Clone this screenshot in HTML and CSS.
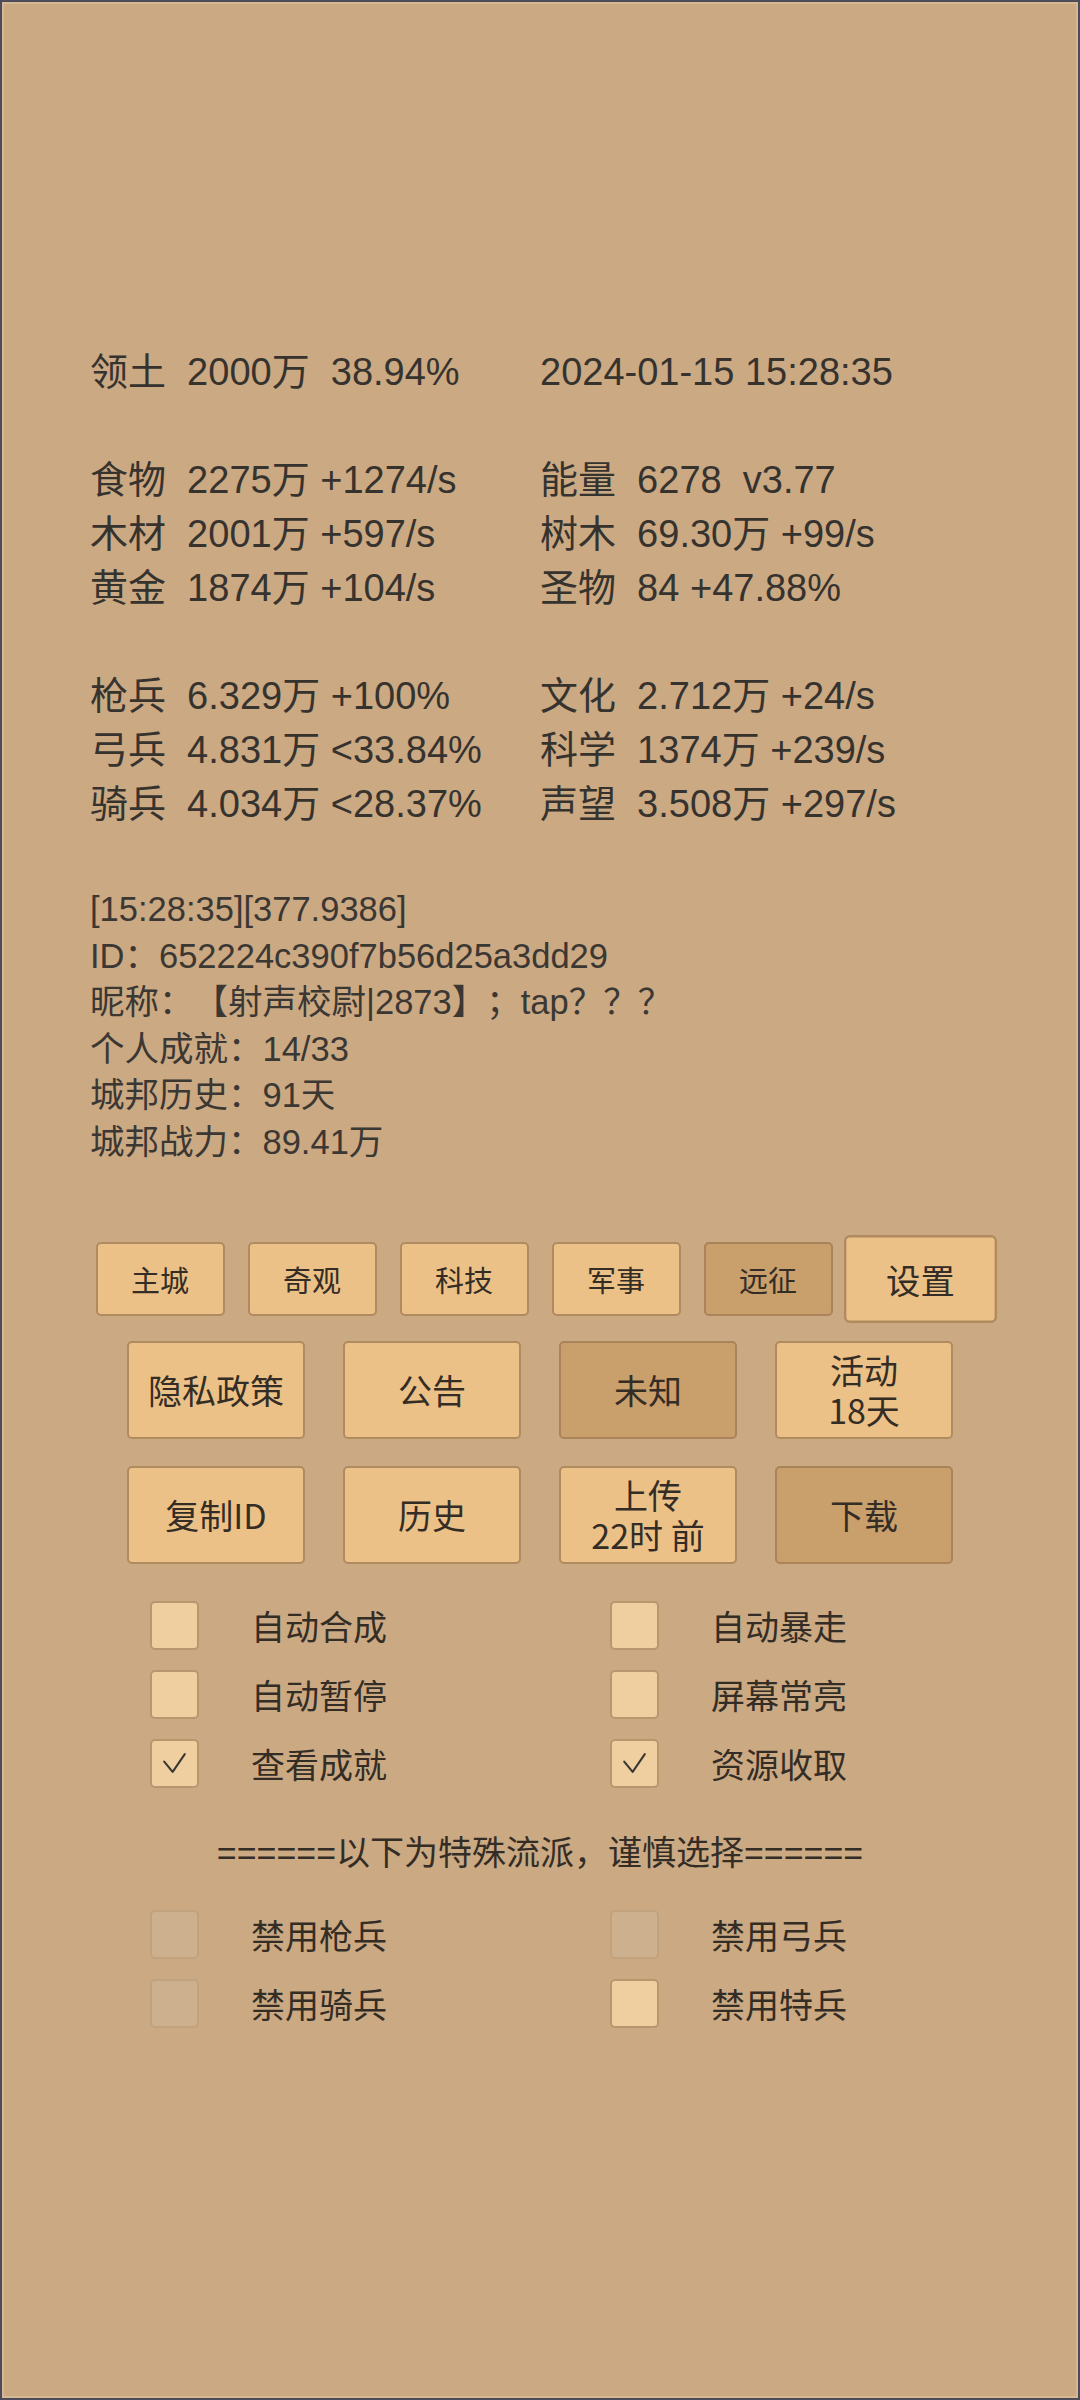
FILE: index.html
```html
<!DOCTYPE html>
<html lang="zh-CN">
<head>
<meta charset="utf-8">
<title>城邦</title>
<link rel="stylesheet" href="styles.css">
</head>
<body>
<div class="screen">
  <section class="stats">
    <div class="cell">领土  2000万  38.94%</div><div class="cell">2024-01-15 15:28:35</div>
    <div class="blank"></div>
    <div class="cell">食物  2275万 +1274/s</div><div class="cell">能量  6278  v3.77</div>
    <div class="cell">木材  2001万 +597/s</div><div class="cell">树木  69.30万 +99/s</div>
    <div class="cell">黄金  1874万 +104/s</div><div class="cell">圣物  84 +47.88%</div>
    <div class="blank"></div>
    <div class="cell">枪兵  6.329万 +100%</div><div class="cell">文化  2.712万 +24/s</div>
    <div class="cell">弓兵  4.831万 &lt;33.84%</div><div class="cell">科学  1374万 +239/s</div>
    <div class="cell">骑兵  4.034万 &lt;28.37%</div><div class="cell">声望  3.508万 +297/s</div>
  </section>

  <section class="info">
    <div class="ln">[15:28:35][377.9386]</div>
    <div class="ln">ID：652224c390f7b56d25a3dd29</div>
    <div class="ln">昵称：【射声校尉|2873】；tap？？？</div>
    <div class="ln">个人成就：14/33</div>
    <div class="ln">城邦历史：91天</div>
    <div class="ln">城邦战力：89.41万</div>
  </section>

  <nav class="tabs">
    <div class="btn small">主城</div>
    <div class="btn small">奇观</div>
    <div class="btn small">科技</div>
    <div class="btn small">军事</div>
    <div class="btn small dark">远征</div>
    <div class="btn small active">设置</div>
  </nav>

  <div class="actions first">
    <div class="btn big">隐私政策</div>
    <div class="btn big">公告</div>
    <div class="btn big dark">未知</div>
    <div class="btn big two">活动<br>18天</div>
  </div>
  <div class="actions second">
    <div class="btn big">复制ID</div>
    <div class="btn big">历史</div>
    <div class="btn big two">上传<br>22时 前</div>
    <div class="btn big dark">下载</div>
  </div>

  <section class="checks">
    <label class="opt"><span class="box"></span><span class="lbl">自动合成</span></label>
    <label class="opt"><span class="box"></span><span class="lbl">自动暴走</span></label>
    <label class="opt"><span class="box"></span><span class="lbl">自动暂停</span></label>
    <label class="opt"><span class="box"></span><span class="lbl">屏幕常亮</span></label>
    <label class="opt"><span class="box"><svg viewBox="0 0 48 48" class="tick"><polyline points="13,22 22,33 35,14"/></svg></span><span class="lbl">查看成就</span></label>
    <label class="opt"><span class="box"><svg viewBox="0 0 48 48" class="tick"><polyline points="13,22 22,33 35,14"/></svg></span><span class="lbl">资源收取</span></label>
  </section>

  <div class="sep">======以下为特殊流派，谨慎选择======</div>

  <section class="checks special">
    <label class="opt"><span class="box off"></span><span class="lbl">禁用枪兵</span></label>
    <label class="opt"><span class="box off"></span><span class="lbl">禁用弓兵</span></label>
    <label class="opt"><span class="box off"></span><span class="lbl">禁用骑兵</span></label>
    <label class="opt"><span class="box"></span><span class="lbl">禁用特兵</span></label>
  </section>
</div>
</body>
</html>
```

FILE: styles.css
```css
html, body {
  margin: 0;
  padding: 0;
  background: #4e4c5a;
}

.screen {
  box-sizing: border-box;
  width: 1080px;
  height: 2400px;
  background: #cba983;
  box-shadow: inset 0 0 0 2px #4e4c5a, inset 0 0 0 4px #d5b994;
  padding-top: 345px;
  font-family: "Liberation Sans", "Noto Sans CJK SC", sans-serif;
  color: #36332f;
  overflow: hidden;
  text-spacing-trim: space-all;
}

.stats {
  display: grid;
  grid-template-columns: 450px 450px;
  padding-left: 90px;
  font-size: 38px;
  line-height: 54px;
}

.stats .cell {
  height: 54px;
  white-space: pre;
}

.stats .blank {
  grid-column: 1 / -1;
  height: 54px;
}

.info {
  margin-top: 55px;
  padding-left: 90px;
  font-size: 34.5px;
  line-height: 46.5px;
  color: #3b3733;
}

.info .ln {
  height: 46.5px;
  white-space: pre;
}

.tabs,
.actions {
  display: flex;
  justify-content: center;
  align-items: center;
}

.tabs {
  margin-top: 77px;
  height: 74px;
  gap: 23px;
}

.actions {
  height: 98px;
  gap: 38px;
}

.actions.first {
  margin-top: 25px;
}

.actions.second {
  margin-top: 27px;
}

.btn {
  box-sizing: border-box;
  display: flex;
  align-items: center;
  justify-content: center;
  text-align: center;
  background: #ebc188;
  border: 2px solid #b18b60;
  border-radius: 5px;
  color: #342d25;
  font-family: "Noto Sans CJK SC", sans-serif;
  font-weight: 400;
}

.btn.small {
  width: 129px;
  height: 74px;
  font-size: 29px;
}

.btn.big {
  width: 178px;
  height: 98px;
  font-size: 34px;
  line-height: 40px;
}

.btn.dark {
  background: #c99f6c;
  border-color: #a9835a;
}

.btn.active {
  transform: scale(1.186);
}

.checks {
  margin-top: 26.5px;
  padding-left: 150px;
  display: grid;
  grid-template-columns: 460px 460px;
}

.checks.special {
  margin-top: 12px;
}

.opt {
  display: flex;
  align-items: center;
  height: 69px;
}

.box {
  box-sizing: border-box;
  width: 49px;
  height: 49px;
  margin-right: 52px;
  background: #efcf9f;
  border: 2px solid #b99670;
  border-radius: 5px;
  display: flex;
}

.box.off {
  background: #cdb08e;
  border-color: #c0a27f;
}

.tick {
  width: 100%;
  height: 100%;
}

.tick polyline {
  fill: none;
  stroke: #3a3632;
  stroke-width: 2.2;
  stroke-linecap: round;
  stroke-linejoin: round;
}

.lbl {
  font-size: 34px;
  color: #342d25;
  font-family: "Noto Sans CJK SC", sans-serif;
  font-weight: 400;
}

.sep {
  margin-top: 21px;
  height: 69px;
  line-height: 69px;
  text-align: center;
  font-size: 34px;
  color: #342d25;
  white-space: pre;
  font-family: "Liberation Sans", "Noto Sans CJK SC", sans-serif;
}
```
